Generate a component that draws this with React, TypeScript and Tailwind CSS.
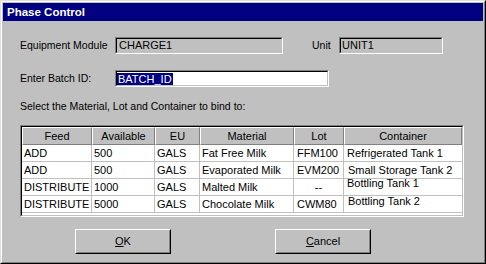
import React from "react"

const rows = [
  { feed: "ADD", avail: "500", eu: "GALS", material: "Fat Free Milk", lot: "FFM100", container: "Refrigerated Tank 1", cpad: "pl-[3px] pt-[2px]" },
  { feed: "ADD", avail: "500", eu: "GALS", material: "Evaporated Milk", lot: "EVM200", container: "Small Storage Tank 2", cpad: "pl-[4px] pt-[2px]" },
  { feed: "DISTRIBUTE", avail: "1000", eu: "GALS", material: "Malted Milk", lot: "--", container: "Bottling Tank 1", cpad: "pl-[3px] -mt-[2px]" },
  { feed: "DISTRIBUTE", avail: "5000", eu: "GALS", material: "Chocolate Milk", lot: "CWM80", container: "Bottling Tank 2", cpad: "pl-[4px] -mt-[1px]" },
]

// largeur des colonnes (Feed, Available, EU, Material, Lot, Container)
const cols = ["w-[70px]", "w-[63px]", "w-[45px]", "w-[94px]", "w-[50px]", "w-[118px]"]
const heads = ["Feed", "Available", "EU", "Material", "Lot", "Container"]

function Sunken({ className, children }: { className: string; children?: React.ReactNode }) {
  return (
    <div className={`border border-t-[#808080] border-l-[#808080] border-b-white border-r-white ${className}`}>
      <div className="h-full border border-t-black border-l-black border-b-[#c0c0c0] border-r-[#c0c0c0]">
        {children}
      </div>
    </div>
  )
}

function Button({ label, rest }: { label: string; rest: string }) {
  return (
    <button
      type="button"
      className="w-[96px] h-[25px] border border-t-white border-l-white border-b-black border-r-black bg-[#c0c0c0]"
    >
      <div className="h-full flex items-center justify-center border border-t-[#c0c0c0] border-l-[#c0c0c0] border-b-[#808080] border-r-[#808080] text-[11px]">
        <span className="underline underline-offset-[1px]">{label}</span>
        <span>{rest}</span>
      </div>
    </button>
  )
}

export default function App() {
  return (
    <div
      className="w-[486px] h-[264px] bg-[#c0c0c0] text-black text-[10.5px] leading-[13px] border border-t-[#dfdfdf] border-l-[#dfdfdf] border-b-black border-r-black"
      style={{ fontFamily: '"Liberation Sans", Arial, sans-serif' }}
    >
      <div className="h-full border border-t-white border-l-white border-b-[#808080] border-r-[#808080] p-px flex flex-col">
        <div className="h-[18px] bg-[#000080] text-white font-bold text-[11.5px] pl-[4px] flex items-center">
          Phase Control
        </div>

        <div className="pl-[17px] pt-[16px] flex flex-col">
          <div className="flex items-center h-[17px]">
            <span className="w-[95px]">Equipment Module</span>
            <Sunken className="w-[168px] h-[17px]">
              <div className="pl-[2px] text-[11px] leading-[13px]">CHARGE1</div>
            </Sunken>
            <span className="ml-[29px] w-[27px]">Unit</span>
            <Sunken className="w-[104px] h-[17px]">
              <div className="pl-[1px] text-[11px] leading-[13px]">UNIT1</div>
            </Sunken>
          </div>

          <div className="flex items-center h-[17px] mt-[16px]">
            <span className="w-[95px]">Enter Batch ID:</span>
            <Sunken className="w-[214px] h-[17px] bg-white">
              <div className="pt-[1px] text-[11px]">
                <span className="bg-[#000080] text-white px-px">BATCH_ID</span>
              </div>
            </Sunken>
          </div>

          <div className="mt-[13px] h-[13px]">Select the Material, Lot and Container to bind to:</div>

          <Sunken className="mt-[12px] w-[444px] h-[92px]">
            <div className="h-full bg-white text-[11px]">
              <div className="flex h-[18px]">
                {heads.map((h, i) => (
                  <div
                    key={h}
                    className={`${cols[i]} shrink-0 bg-[#c0c0c0] flex items-center justify-center border border-t-white border-l-white border-b-[#808080] border-r-[#808080]`}
                  >
                    {h}
                  </div>
                ))}
              </div>
              {rows.map((r) => (
                <div key={r.material} className="flex h-[17px]">
                  {[r.feed, r.avail, r.eu, r.material, r.lot].map((v, i) => (
                    <div
                      key={i}
                      className={`${cols[i]} shrink-0 border-r border-b border-[#c0c0c0] flex items-center ${
                        i === 4 ? (v === "--" ? "justify-center" : "pl-[3px]") : "pl-[2px]"
                      }`}
                    >
                      {v}
                    </div>
                  ))}
                  <div className={`${cols[5]} shrink-0 border-b border-[#c0c0c0] ${r.cpad}`}>{r.container}</div>
                </div>
              ))}
            </div>
          </Sunken>

          <div className="mt-[12px] flex pl-[55px] gap-[104px]">
            <Button label="O" rest="K" />
            <Button label="C" rest="ancel" />
          </div>
        </div>
      </div>
    </div>
  )
}
